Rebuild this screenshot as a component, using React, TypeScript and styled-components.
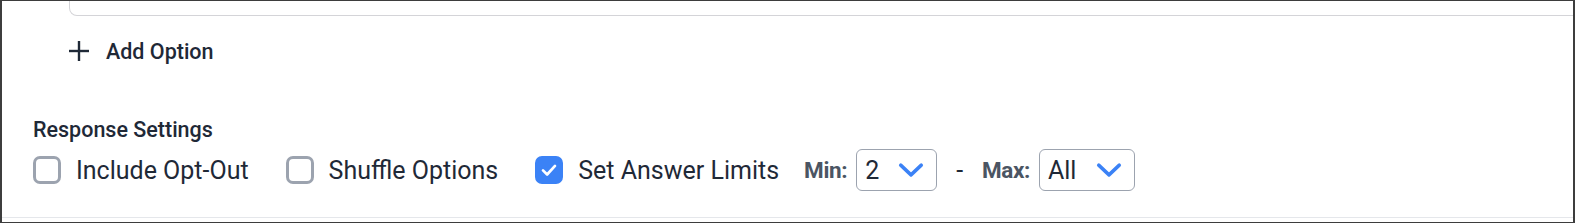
import React from "react";
import styled, { createGlobalStyle } from "styled-components";

const Global = createGlobalStyle`
  html, body { margin: 0; padding: 0; background: #fff; }
  body { font-family: Roboto, "Liberation Sans", Arial, sans-serif; }
`;

const Frame = styled.div`
  box-sizing: border-box;
  width: 1575px;
  height: 223px;
  border-top: 1px solid #3d3d3d;
  border-bottom: 1px solid #3d3d3d;
  border-left: 2px solid #3d3d3d;
  border-right: 2px solid #3d3d3d;
  overflow: hidden;
  display: flex;
  flex-direction: column;
  background: #fff;
`;

const CardTail = styled.div`
  box-sizing: border-box;
  height: 15px;
  margin-left: 67px;
  margin-right: -20px;
  border: 1px solid #d4d4d8;
  border-top: none;
  border-bottom-left-radius: 8px;
  flex-shrink: 0;
`;

const AddButton = styled.button`
  display: flex;
  align-items: center;
  gap: 16px;
  align-self: flex-start;
  margin: 22px 0 0 66px;
  padding: 0;
  background: none;
  border: none;
  font-family: Roboto, "Liberation Sans", Arial, sans-serif;
  font-size: 21.5px;
  font-weight: 500;
  color: #1f2937;
  cursor: pointer;
  height: 26px;
`;

const Section = styled.div`
  flex: 1;
  display: flex;
  flex-direction: column;
  padding: 0 0 0 31px;
  margin-top: 53px;
  border-bottom: 1px solid #e5e7eb;
  margin-bottom: 4px;
`;

const SectionTitle = styled.div`
  font-size: 21.5px;
  font-weight: 500;
  color: #1f2937;
  line-height: 26px;
`;

const Row = styled.div`
  display: flex;
  align-items: center;
  margin-top: 6px;
  height: 42px;
`;

const CheckLabel = styled.label<{ $last?: boolean }>`
  display: flex;
  align-items: center;
  gap: 15px;
  margin-right: ${(p) => (p.$last ? 25 : 37)}px;
  font-size: 25px;
  color: #1f2937;
  cursor: pointer;
`;

const Box = styled.span<{ $checked?: boolean }>`
  box-sizing: border-box;
  width: 28px;
  height: 28px;
  border-radius: 7px;
  border: 3px solid ${(p) => (p.$checked ? "#3b82f6" : "#9ca3af")};
  background: ${(p) => (p.$checked ? "#3b82f6" : "#fff")};
  display: flex;
  align-items: center;
  justify-content: center;
`;

const LimitLabel = styled.span`
  font-size: 22.5px;
  font-weight: 700;
  color: #4b5563;
  margin-right: 9px;
  letter-spacing: -0.4px;
`;

const Select = styled.div<{ $w: number }>`
  box-sizing: border-box;
  width: ${(p) => p.$w}px;
  height: 42px;
  border: 1px solid #9ca3af;
  border-radius: 6px;
  display: flex;
  align-items: center;
  justify-content: space-between;
  padding: 0 12px 0 8px;
  font-size: 25px;
  color: #1f2937;
`;

const Dash = styled.span`
  font-size: 25px;
  color: #1f2937;
  margin: 0 19px 0 19px;
`;

const Check = () => (
  <svg width="18" height="18" viewBox="0 0 24 24" fill="none" stroke="#fff" strokeWidth="3.6" strokeLinecap="round" strokeLinejoin="round">
    <polyline points="4 12.5 9.5 18 20 6.5" />
  </svg>
);

const Chevron = () => (
  <svg width="26" height="26" viewBox="0 0 24 24" fill="none" stroke="#3b82f6" strokeWidth="3.2" strokeLinecap="round" strokeLinejoin="round">
    <polyline points="2.5 7.5 12 16.5 21.5 7.5" />
  </svg>
);

const Plus = () => (
  <svg width="22" height="22" viewBox="0 0 22 22" fill="none" stroke="#1f2937" strokeWidth="2.4" strokeLinecap="butt">
    <line x1="11" y1="1" x2="11" y2="21" />
    <line x1="1" y1="11" x2="21" y2="11" />
  </svg>
);

export default function App() {
  return (
    <>
      <Global />
      <Frame>
        <CardTail />
        <AddButton>
          <Plus />
          Add Option
        </AddButton>
        <Section>
          <SectionTitle>Response Settings</SectionTitle>
          <Row>
            <CheckLabel>
              <Box />
              Include Opt-Out
            </CheckLabel>
            <CheckLabel>
              <Box />
              Shuffle Options
            </CheckLabel>
            <CheckLabel $last>
              <Box $checked>
                <Check />
              </Box>
              Set Answer Limits
            </CheckLabel>
            <LimitLabel>Min:</LimitLabel>
            <Select $w={81}>
              2
              <Chevron />
            </Select>
            <Dash>-</Dash>
            <LimitLabel>Max:</LimitLabel>
            <Select $w={96}>
              All
              <Chevron />
            </Select>
          </Row>
        </Section>
      </Frame>
    </>
  );
}
